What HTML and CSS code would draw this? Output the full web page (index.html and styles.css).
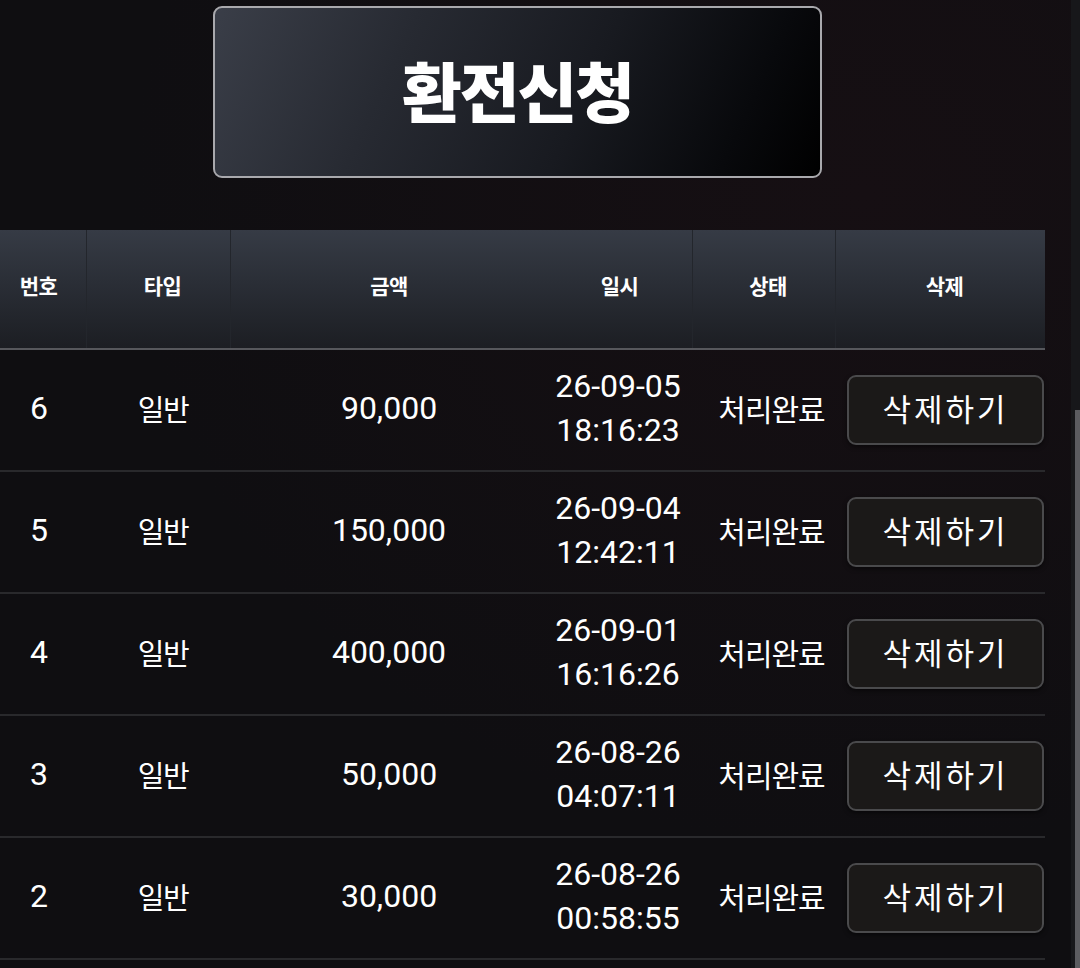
FILE: index.html
```html
<!DOCTYPE html>
<html lang="ko">
<head>
<meta charset="utf-8">
<title>환전신청</title>
<link rel="stylesheet" href="styles.css">
</head>
<body>
<div class="screen">
  <main class="content">
    <div class="title-row">
      <div class="title-box"><h1 class="title">환전신청</h1></div>
    </div>
    <div class="table">
      <div class="thead">
        <div class="th c-no sep">번호</div>
        <div class="th c-type sep">타입</div>
        <div class="th c-amt">금액</div>
        <div class="th c-date sep">일시</div>
        <div class="th c-stat sep">상태</div>
        <div class="th c-del">삭제</div>
      </div>

      <div class="tr">
        <div class="td c-no num">6</div>
        <div class="td c-type ko">일반</div>
        <div class="td c-amt num">90,000</div>
        <div class="td c-date num"><span>26-09-05</span><span>18:16:23</span></div>
        <div class="td c-stat ko stat">처리완료</div>
        <div class="td c-del"><button class="del-btn">삭제하기</button></div>
      </div>
      <div class="tr">
        <div class="td c-no num">5</div>
        <div class="td c-type ko">일반</div>
        <div class="td c-amt num">150,000</div>
        <div class="td c-date num"><span>26-09-04</span><span>12:42:11</span></div>
        <div class="td c-stat ko stat">처리완료</div>
        <div class="td c-del"><button class="del-btn">삭제하기</button></div>
      </div>
      <div class="tr">
        <div class="td c-no num">4</div>
        <div class="td c-type ko">일반</div>
        <div class="td c-amt num">400,000</div>
        <div class="td c-date num"><span>26-09-01</span><span>16:16:26</span></div>
        <div class="td c-stat ko stat">처리완료</div>
        <div class="td c-del"><button class="del-btn">삭제하기</button></div>
      </div>
      <div class="tr">
        <div class="td c-no num">3</div>
        <div class="td c-type ko">일반</div>
        <div class="td c-amt num">50,000</div>
        <div class="td c-date num"><span>26-08-26</span><span>04:07:11</span></div>
        <div class="td c-stat ko stat">처리완료</div>
        <div class="td c-del"><button class="del-btn">삭제하기</button></div>
      </div>
      <div class="tr">
        <div class="td c-no num">2</div>
        <div class="td c-type ko">일반</div>
        <div class="td c-amt num">30,000</div>
        <div class="td c-date num"><span>26-08-26</span><span>00:58:55</span></div>
        <div class="td c-stat ko stat">처리완료</div>
        <div class="td c-del"><button class="del-btn">삭제하기</button></div>
      </div>
    </div>
  </main>
  <div class="scrolltrack"><div class="thumb"></div></div>
</div>
</body>
</html>
```

FILE: styles.css
```css
* { box-sizing: border-box; }

html, body {
  margin: 0;
  padding: 0;
  height: 100%;
  overflow: hidden;
  background: #0f0e11;
  color: #ffffff;
  font-family: Roboto, "Noto Sans CJK KR", sans-serif;
}

.screen {
  display: flex;
  height: 968px;
  width: 1080px;
  overflow: hidden;
  background: radial-gradient(ellipse at 80% 20%, #160f13 0%, #0f0e11 60%);
}

.content {
  width: 1045px;
  flex: none;
  padding-top: 6px;
}

.title-row {
  padding-left: 213px;
}

.title-box {
  width: 609px;
  height: 172px;
  border: 2px solid #a9a9ad;
  border-radius: 9px;
  background: linear-gradient(115deg, #3a3e48 0%, #272a32 30%, #181a20 60%, #08090c 85%, #000000 100%);
  display: flex;
  align-items: center;
  justify-content: center;
}

.title {
  margin: 0;
  font-family: "Noto Sans CJK KR", sans-serif;
  font-weight: 900;
  font-size: 65px;
  letter-spacing: -2px;
  line-height: 1;
  color: #ffffff;
  padding-bottom: 6px;
}

.table {
  margin-top: 52px;
}

.thead, .tr {
  display: grid;
  grid-template-columns: 87px 144px 308px 154px 143px 209px;
}

.thead {
  height: 120px;
  background: linear-gradient(180deg, #363b45 0%, #2a2e36 45%, #1c1e23 100%);
  border-bottom: 2px solid #56575c;
}

.th {
  display: flex;
  align-items: center;
  justify-content: center;
  font-family: "Noto Sans CJK KR", sans-serif;
  font-weight: 700;
  font-size: 21px;
  letter-spacing: -0.5px;
  padding-left: 8px;
  padding-bottom: 8px;
}

.th.c-no { padding-left: 0; padding-right: 9px; }

.th.sep { border-right: 1px solid #23262c; }

.tr {
  height: 122px;
  border-bottom: 2px solid #29292c;
}

.td {
  display: flex;
  flex-direction: column;
  align-items: center;
  justify-content: center;
  padding-left: 8px;
}

.td.c-no { padding-left: 0; padding-right: 9px; }

.num {
  font-family: Roboto, sans-serif;
  font-size: 32px;
  line-height: 44px;
  padding-bottom: 4px;
}

.td.c-date { padding-left: 4px; }

.ko {
  font-family: "Noto Sans CJK KR", sans-serif;
  font-size: 29px;
  letter-spacing: -1.5px;
  padding-bottom: 4px;
}

.stat {
  font-size: 30px;
  letter-spacing: -1px;
  padding-left: 14px;
}

.td.c-del {
  padding-left: 0;
  align-items: flex-end;
  padding-right: 1px;
  padding-top: 0;
}

.del-btn {
  width: 197px;
  height: 70px;
  border: 2px solid #4a4a4c;
  border-radius: 9px;
  background: #1b1918;
  color: #ffffff;
  font-family: "Noto Sans CJK KR", sans-serif;
  font-size: 31px;
  font-weight: 400;
  letter-spacing: 3px;
  padding: 0 0 6px 0;
  box-shadow: 0 2px 4px rgba(0, 0, 0, 0.5);
}

.scrolltrack {
  margin-left: auto;
  width: 9px;
  background: #17171a;
  padding-top: 410px;
  display: flex;
  justify-content: flex-end;
}

.thumb {
  width: 5px;
  height: 700px;
  background: #5c5c60;
}
```
